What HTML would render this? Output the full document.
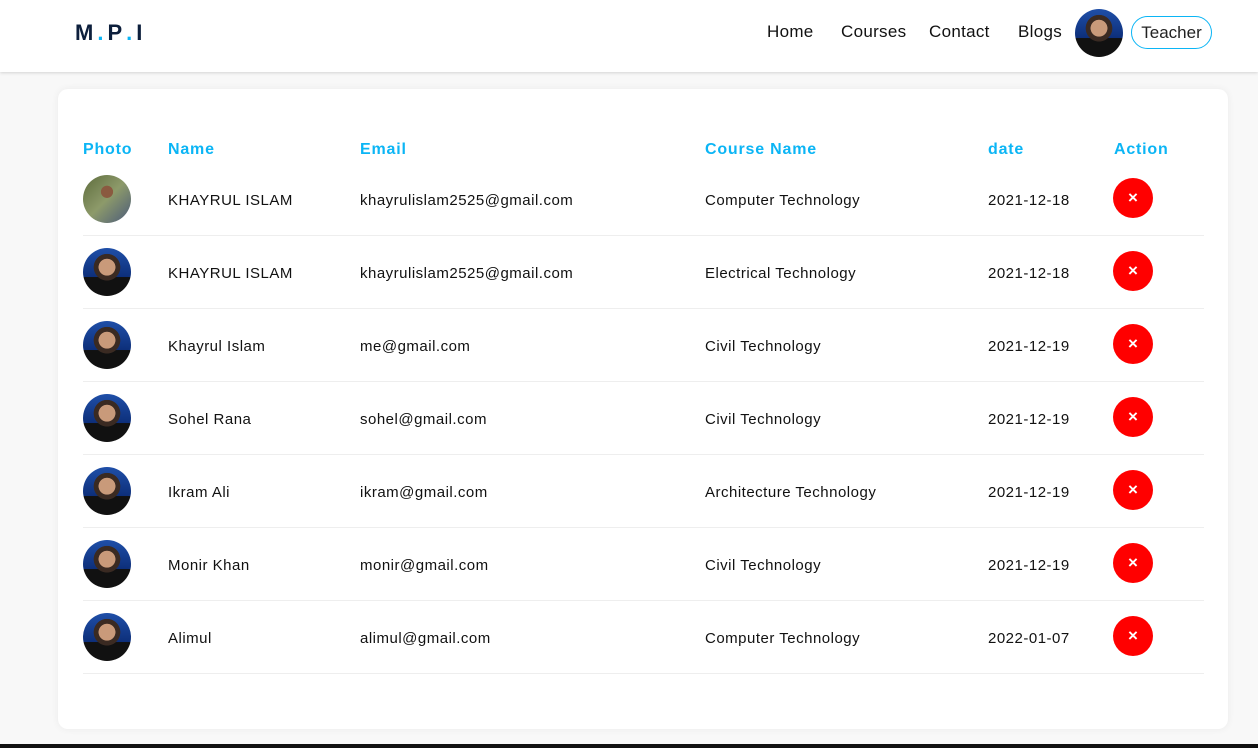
<!DOCTYPE html>
<html><head><style>
*{margin:0;padding:0;box-sizing:border-box}
body{width:1258px;height:748px;background:#f8f8f8;font-family:"Liberation Sans",sans-serif;position:relative;overflow:hidden}
.nav{position:absolute;left:0;top:0;width:1258px;height:72px;background:#fff;box-shadow:0 1px 3px rgba(0,0,0,.15)}
.logo{position:absolute;left:75px;top:20px;font-weight:bold;font-size:22px;color:#0d1f3c;letter-spacing:4px}
.logo b{color:#0bb5f5}
.links{position:absolute;top:22px;font-size:17px;color:#111;letter-spacing:.3px}
.av{border-radius:50%;background:radial-gradient(circle at 50% 40%,#c99a7a 0 22%,#3a2a22 23% 35%,transparent 36%),linear-gradient(180deg,#1f4fa8,#0d2f7a 60%,#111 61%)}
.teacher{position:absolute;left:1131px;top:16px;width:81px;height:33px;border:1px solid #0bb5f5;border-radius:17px;font-size:17px;color:#222;text-align:center;line-height:31px}
.card{position:absolute;left:58px;top:89px;width:1170px;height:640px;background:#fff;border-radius:10px;box-shadow:0 0 8px rgba(0,0,0,.06)}
.h{position:absolute;top:141px;font-weight:bold;font-size:16px;color:#0bb5f5;letter-spacing:.8px}
.c{position:absolute;font-size:15px;color:#111;letter-spacing:.5px;margin-top:2px}
.line{position:absolute;left:83px;width:1121px;height:1px;background:#eee}
.del{position:absolute;left:1113px;width:40px;height:40px;border-radius:50%;background:#f00;color:#fff;font-weight:bold;font-size:17px;text-align:center;line-height:40px}
.bar{position:absolute;left:0;top:744px;width:1258px;height:4px;background:#111}
</style></head><body>
<div class="nav">
<div class="logo">M<b>.</b>P<b>.</b>I</div>
<span class="links" style="left:767px">Home</span>
<span class="links" style="left:841px">Courses</span>
<span class="links" style="left:929px">Contact</span>
<span class="links" style="left:1018px">Blogs</span>
<div class="av" style="position:absolute;left:1075px;top:9px;width:48px;height:48px"></div>
<div class="teacher">Teacher</div>
</div>
<div class="card"></div>
<div class="h" style="left:83px">Photo</div>
<div class="h" style="left:168px">Name</div>
<div class="h" style="left:360px">Email</div>
<div class="h" style="left:705px">Course Name</div>
<div class="h" style="left:988px">date</div>
<div class="h" style="left:1114px">Action</div>
<div class="bar"></div>
<div class="av" style="position:absolute;left:83px;top:175px;width:48px;height:48px;background:radial-gradient(circle at 50% 35%,#8a5a40 0 15%,transparent 16%),linear-gradient(135deg,#5d6b3c,#8d9a6a 50%,#4a5a7a)"></div>
<div class="c" style="left:168px;top:190px">KHAYRUL ISLAM</div><div class="c" style="left:360px;top:190px">khayrulislam2525@gmail.com</div><div class="c" style="left:705px;top:190px">Computer Technology</div><div class="c" style="left:988px;top:190px">2021-12-18</div><div class="del" style="top:178px">×</div><div class="line" style="top:235px"></div>

<div class="av" style="position:absolute;left:83px;top:248px;width:48px;height:48px"></div>
<div class="c" style="left:168px;top:263px">KHAYRUL ISLAM</div><div class="c" style="left:360px;top:263px">khayrulislam2525@gmail.com</div><div class="c" style="left:705px;top:263px">Electrical Technology</div><div class="c" style="left:988px;top:263px">2021-12-18</div><div class="del" style="top:251px">×</div><div class="line" style="top:308px"></div>

<div class="av" style="position:absolute;left:83px;top:321px;width:48px;height:48px"></div>
<div class="c" style="left:168px;top:336px">Khayrul Islam</div><div class="c" style="left:360px;top:336px">me@gmail.com</div><div class="c" style="left:705px;top:336px">Civil Technology</div><div class="c" style="left:988px;top:336px">2021-12-19</div><div class="del" style="top:324px">×</div><div class="line" style="top:381px"></div>

<div class="av" style="position:absolute;left:83px;top:394px;width:48px;height:48px"></div>
<div class="c" style="left:168px;top:409px">Sohel Rana</div><div class="c" style="left:360px;top:409px">sohel@gmail.com</div><div class="c" style="left:705px;top:409px">Civil Technology</div><div class="c" style="left:988px;top:409px">2021-12-19</div><div class="del" style="top:397px">×</div><div class="line" style="top:454px"></div>

<div class="av" style="position:absolute;left:83px;top:467px;width:48px;height:48px"></div>
<div class="c" style="left:168px;top:482px">Ikram Ali</div><div class="c" style="left:360px;top:482px">ikram@gmail.com</div><div class="c" style="left:705px;top:482px">Architecture Technology</div><div class="c" style="left:988px;top:482px">2021-12-19</div><div class="del" style="top:470px">×</div><div class="line" style="top:527px"></div>

<div class="av" style="position:absolute;left:83px;top:540px;width:48px;height:48px"></div>
<div class="c" style="left:168px;top:555px">Monir Khan</div><div class="c" style="left:360px;top:555px">monir@gmail.com</div><div class="c" style="left:705px;top:555px">Civil Technology</div><div class="c" style="left:988px;top:555px">2021-12-19</div><div class="del" style="top:543px">×</div><div class="line" style="top:600px"></div>

<div class="av" style="position:absolute;left:83px;top:613px;width:48px;height:48px"></div>
<div class="c" style="left:168px;top:628px">Alimul</div><div class="c" style="left:360px;top:628px">alimul@gmail.com</div><div class="c" style="left:705px;top:628px">Computer Technology</div><div class="c" style="left:988px;top:628px">2022-01-07</div><div class="del" style="top:616px">×</div><div class="line" style="top:673px"></div>
</body></html>
